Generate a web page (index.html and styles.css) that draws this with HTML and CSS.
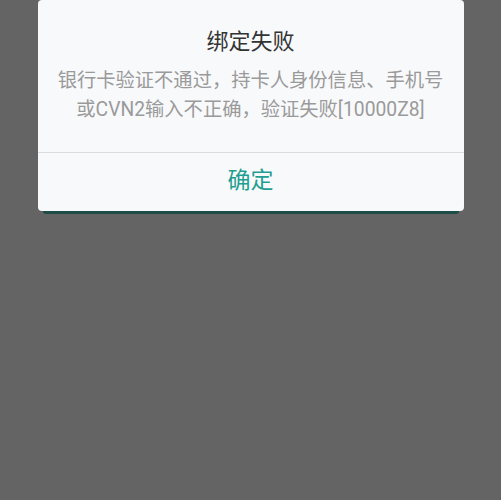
FILE: index.html
```html
<!DOCTYPE html>
<html lang="zh-CN">
<head>
  <meta charset="UTF-8">
  <title>绑定失败</title>
  <link rel="stylesheet" href="styles.css">
</head>
<body>
  <div class="dialog">
    <div class="dialog-body">
      <div class="dialog-title">绑定失败</div>
      <div class="dialog-msg">银行卡验证不通过，持卡人身份信息、手机号<br>或CVN2输入不正确，验证失败[10000Z8]</div>
    </div>
    <div class="dialog-btn">确定</div>
  </div>
  <div class="under-bar"></div>
</body>
</html>
```

FILE: styles.css
```css
body {
  background-color: #646464;
  font-family: Roboto, "Noto Sans CJK SC", sans-serif;
  margin: 0;
  padding: 0;
}

.dialog {
  width: 426px;
  margin: 0 auto;
  background-color: #f8f9fb;
  border-radius: 4px;
  text-align: center;
  position: relative;
  z-index: 1;
}

.dialog-body {
  padding: 26px 8px 28px;
  border-bottom: 1px solid #dcdcdc;
}

.dialog-title {
  font-size: 22px;
  line-height: 32px;
  color: #333333;
}

.dialog-msg {
  margin-top: 8px;
  font-size: 19.3px;
  line-height: 29px;
  color: #9a9a9a;
}

.dialog-btn {
  height: 58px;
  line-height: 56px;
  font-size: 23px;
  color: #1f9e91;
}

.under-bar {
  width: 416px;
  height: 4px;
  margin: -1px auto 0;
  background-color: #1e4c47;
  border-radius: 0 0 3px 3px;
}
```
